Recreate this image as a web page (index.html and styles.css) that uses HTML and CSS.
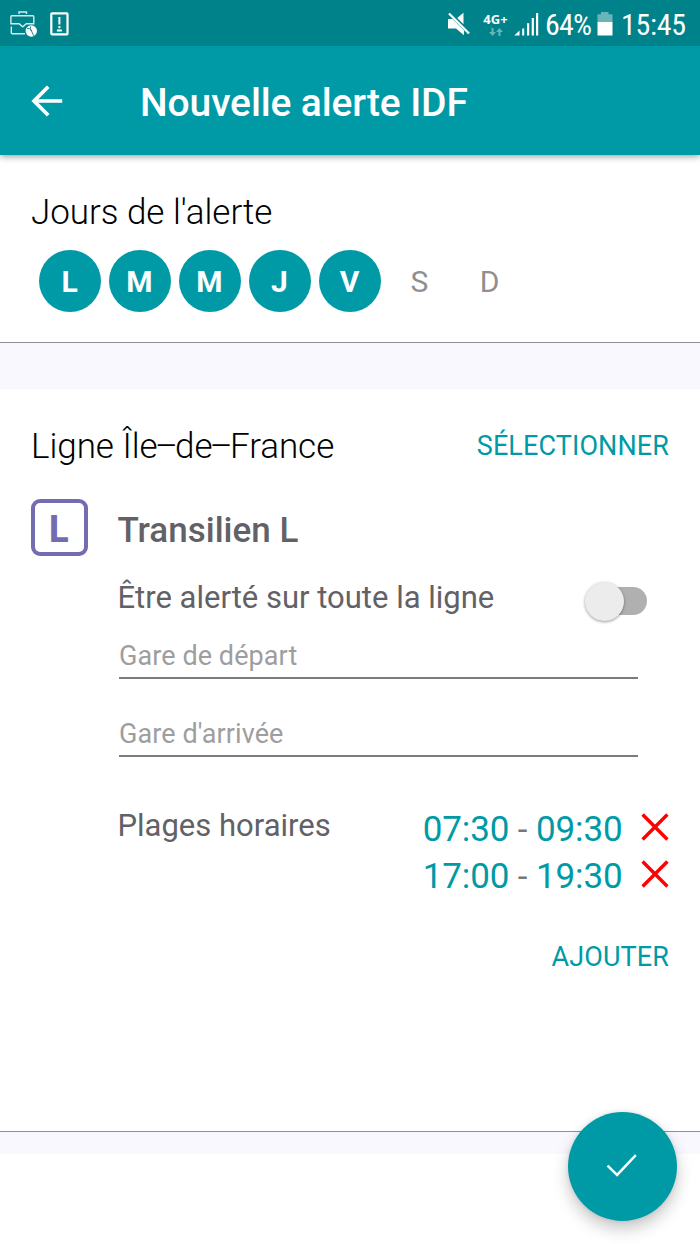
FILE: index.html
```html
<!DOCTYPE html>
<html lang="fr">
<head>
<meta charset="utf-8">
<title>Nouvelle alerte IDF</title>
<link rel="stylesheet" href="styles.css">
</head>
<body>
<div class="status-bar">
  <svg class="ic-case" width="28" height="28" viewBox="0 0 28 28" fill="none" stroke="#d3ecee" stroke-width="1.400">
    <path d="M9 4V2h7.500v2M1.800 5.700h21a1 1 0 0 1 1 1v7.100h-7.500l-3.600 3-3.600-3H.900V6.700a1 1 0 0 1 .9-1z"/>
    <path d="M1.300 16.500v6.300a1 1 0 0 0 1 1H15"/>
    <circle cx="21.300" cy="21" r="5.700" fill="#fff" stroke="none"/>
    <path d="M17 18.500q3-1 4.500 2.500t2.500 5M20.500 16.500q-.5 2 1 4.500" stroke="#00828a" stroke-width=".9"/>
  </svg>
  <svg class="ic-note" width="19" height="24" viewBox="0 0 19 24" fill="none" stroke="#fff">
    <rect x="1.300" y="1.300" width="16.200" height="21" rx=".8" stroke-width="2.200"/>
    <path d="M9.400 5v7.500M9.400 14v2.300M6.900 18.500h5" stroke-width="2"/>
  </svg>
  <span class="spacer"></span>
  <svg class="ic-mute" width="24" height="24" viewBox="0 0 24 24" fill="#fff">
    <path d="M1 7h4.500L17 18.500v4.700L9 16.500H1zM10.200 6l6.300-5.200v11.500z"/>
    <path d="M2 1.500l20 20" stroke="#fff" stroke-width="2.300"/>
  </svg>
  <span class="network">
    <span class="network-name">4G+</span>
    <svg width="14" height="8" viewBox="0 0 14 8" fill="#68b4b8"><path d="M2.500 0h2v4H7L3.500 8 0 4h2.500zM10.500 0L14 4h-2.500v4h-2V4H7z"/></svg>
  </span>
  <svg class="ic-signal" width="25" height="24" viewBox="0 0 25 24" fill="#fff">
    <path d="M5.500 18.500V23.500H.3zM8.200 16.500h2v7h-2zM13 11.300h2.200v12.200H13zM17.700 6h2.200v17.500h-2.200zM22 1h2.200v22.500H22z"/>
  </svg>
  <span class="status-text battery-level">64%</span>
  <svg class="ic-battery" width="16" height="24" viewBox="0 0 16 24">
    <path d="M4 0h7.500v2.200H15.500V10H.5V2.200H4z" fill="#68b4b8"/><path d="M.5 10h15v13.500H.5z" fill="#fff"/>
  </svg>
  <span class="status-text clock">15:45</span>
</div>
<header class="app-bar">
  <svg width="32" height="32" viewBox="0 0 32 32" fill="none" stroke="#fff" stroke-width="3.700"><path d="M31.200 16H3.500M17.200 1.700L3 16l14.200 14.300"/></svg>
  <h1 class="app-title">Nouvelle alerte IDF</h1>
</header>
<section class="section days-section">
  <h2 class="section-title">Jours de l'alerte</h2>
  <div class="days">
    <span class="day on">L</span><span class="day on">M</span><span class="day on">M</span><span class="day on">J</span><span class="day on">V</span><span class="day">S</span><span class="day">D</span>
  </div>
</section>
<section class="section line-section">
  <div class="section-head">
    <h2 class="section-title">Ligne Îl<span class="tight">e–</span>d<span class="tight">e–</span>France</h2>
    <span class="action select">SÉLECTIONNER</span>
  </div>
  <div class="line">
    <div class="line-logo">L</div>
    <div class="line-body">
      <div class="line-name">Transilien L</div>
      <div class="row whole-line">
        <span class="label label-whole">Être alerté sur toute la ligne</span>
        <span class="switch"><span class="thumb"></span></span>
      </div>
      <div class="field"><span class="hint">Gare de départ</span></div>
      <div class="field"><span class="hint">Gare d'arrivée</span></div>
      <div class="row slots">
        <span class="label">Plages horaires</span>
        <div class="slot-list">
          <div class="slot"><span class="slot-time">07:30 <i>-</i> 09:30</span><svg width="28" height="28" viewBox="0 0 28 28" stroke="#f00" stroke-width="3.400"><path d="M1.600 1.500l24.800 25M26.400 1.500L1.600 26.500"/></svg></div>
          <div class="slot"><span class="slot-time">17:00 <i>-</i> 19:30</span><svg width="28" height="28" viewBox="0 0 28 28" stroke="#f00" stroke-width="3.400"><path d="M1.600 1.500l24.800 25M26.400 1.500L1.600 26.500"/></svg></div>
        </div>
      </div>
      <div class="action add">AJOUTER</div>
    </div>
  </div>
</section>
<div class="footer"></div>
<div class="fab">
  <svg width="32" height="24" viewBox="0 0 32 24" fill="none" stroke="#fff" stroke-width="2.500"><path d="M1.500 11.700l9.600 9.200L29.800 1.200"/></svg>
</div>
</body>
</html>
```

FILE: styles.css
```css
* { box-sizing: border-box; }
body {
  margin: 0;
  height: 1244px;
  position: relative;
  overflow: hidden;
  display: flex;
  flex-direction: column;
  background: #f9f8fe;
  font-family: Roboto, "Liberation Sans", sans-serif;
}
h1, h2 { margin: 0; }
svg { display: block; flex: none; }
span, .action, .line-name { white-space: nowrap; }

.status-bar {
  height: 46px;
  display: flex;
  align-items: flex-start;
  padding: 0 15px 0 10px;
  background: #00828a;
  color: #fff;
  z-index: 2;
}
.ic-case { margin-top: 10px; }
.ic-note { margin: 12px 0 0 12px; }
.spacer { flex: 1; }
.ic-mute { margin-top: 12px; }
.network {
  width: 25px;
  margin: 13px 0 0 12px;
  display: flex;
  flex-direction: column;
  align-items: center;
  gap: 2px;
}
.network-name {
  font: bold 13px/13px "Open Sans", sans-serif;
}
.ic-signal { margin: 12px 0 0 6px; }
.status-text {
  font-family: "Roboto Condensed", Roboto, sans-serif;
  font-stretch: 75%;
  font-size: 30px;
  line-height: 40px;
  padding-top: 5px;
}
.battery-level { width: 46px; margin-left: 6px; letter-spacing: -.8px; }
.ic-battery { margin: 12px 0 0 6px; }
.clock { width: 64px; margin-left: 8px; letter-spacing: -.3px; }

.app-bar {
  height: 109px;
  display: flex;
  align-items: center;
  padding: 0 31px 0;
  gap: 77px;
  background: #009aa7;
  color: #fff;
  box-shadow: 0 1px 7px rgba(0, 0, 0, .45);
  z-index: 1;
}
.app-title {
  font-size: 39px;
  font-weight: 500;
  line-height: 46px;
  letter-spacing: -.12px;
  padding-top: 4px;
  white-space: nowrap;
}

.section {
  background: #fff;
  border-bottom: 1px solid #8f8f94;
}
.days-section { height: 188px; padding: 38px 31px 0; }
.line-section { height: 743px; margin-top: 46px; padding: 38px 31px 0; }
.section-title {
  font-size: 35px;
  font-weight: 300;
  line-height: 40px;
  letter-spacing: -.04px;
  color: #000;
  white-space: nowrap;
}
.tight { letter-spacing: -2.7px; }
.days { display: flex; gap: 8px; padding: 16.500px 0 0 8px; }
.day {
  width: 62px;
  height: 62px;
  border-radius: 50%;
  font-size: 30px;
  line-height: 63px;
  text-align: center;
  text-indent: -1px;
  color: #8f8f8f;
}
.day.on { background: #009aa7; color: #fff; font-weight: 700; }

.section-head { display: flex; justify-content: space-between; }
.action { font-size: 27px; line-height: 40px; color: #009aa7; letter-spacing: .1px; }
.select { margin-top: -1px; }
.line { display: flex; gap: 30px; margin-top: 32px; }
.line-logo {
  width: 57px;
  height: 57px;
  flex: none;
  border: 4px solid #746cb0;
  border-radius: 9px;
  font: bold 38px/49px "Open Sans", sans-serif;
  color: #746cb0;
  text-align: center;
  text-indent: -2px;
}
.line-body { flex: 1; padding-top: 12px; color: #616166; }
.line-name { font-size: 35px; font-weight: 500; line-height: 40px; margin-left: -.5px; }
.row { display: flex; justify-content: space-between; }
.label { font-size: 31px; line-height: 40px; margin-left: -.5px; }
.whole-line { margin-top: 27px; padding-right: 22px; }
.switch {
  width: 56px;
  height: 28px;
  margin-top: 9px;
  border-radius: 14px;
  background: #b0b0b0;
  display: flex;
  align-items: center;
}
.thumb {
  width: 39px;
  height: 39px;
  flex: none;
  margin-left: -6px;
  border-radius: 50%;
  background: #ececec;
  box-shadow: 0 1px 3px rgba(0, 0, 0, .4);
}
.field {
  width: 519px;
  height: 43px;
  margin: 0 0 35px 1px;
  border-bottom: 2px solid #7b7b7b;
}
.whole-line + .field { margin-top: 18px; }
.hint { font-size: 27px; line-height: 41px; letter-spacing: .08px; color: #9e9e9e; }
.slots { margin-top: 49px; }
.slot { display: flex; justify-content: flex-end; height: 47.300px; }
.slot-time { font-size: 35px; line-height: 47px; letter-spacing: -.12px; color: #009aa7; }
.slot-time i { font-style: normal; color: #777; }
.slot svg { margin: 7px 0 0 18.500px; }
.add { margin-top: 36.500px; text-align: right; }

.footer { height: 90px; margin-top: 22px; background: #fff; }
.fab {
  position: absolute;
  left: 567.500px;
  top: 1111.500px;
  width: 109px;
  height: 109px;
  border-radius: 50%;
  display: flex;
  align-items: center;
  justify-content: center;
  background: #009aa7;
  box-shadow: 0 8px 16px rgba(0, 0, 0, .22), 0 0 4px rgba(0, 0, 0, .1);
  z-index: 2;
}
```
